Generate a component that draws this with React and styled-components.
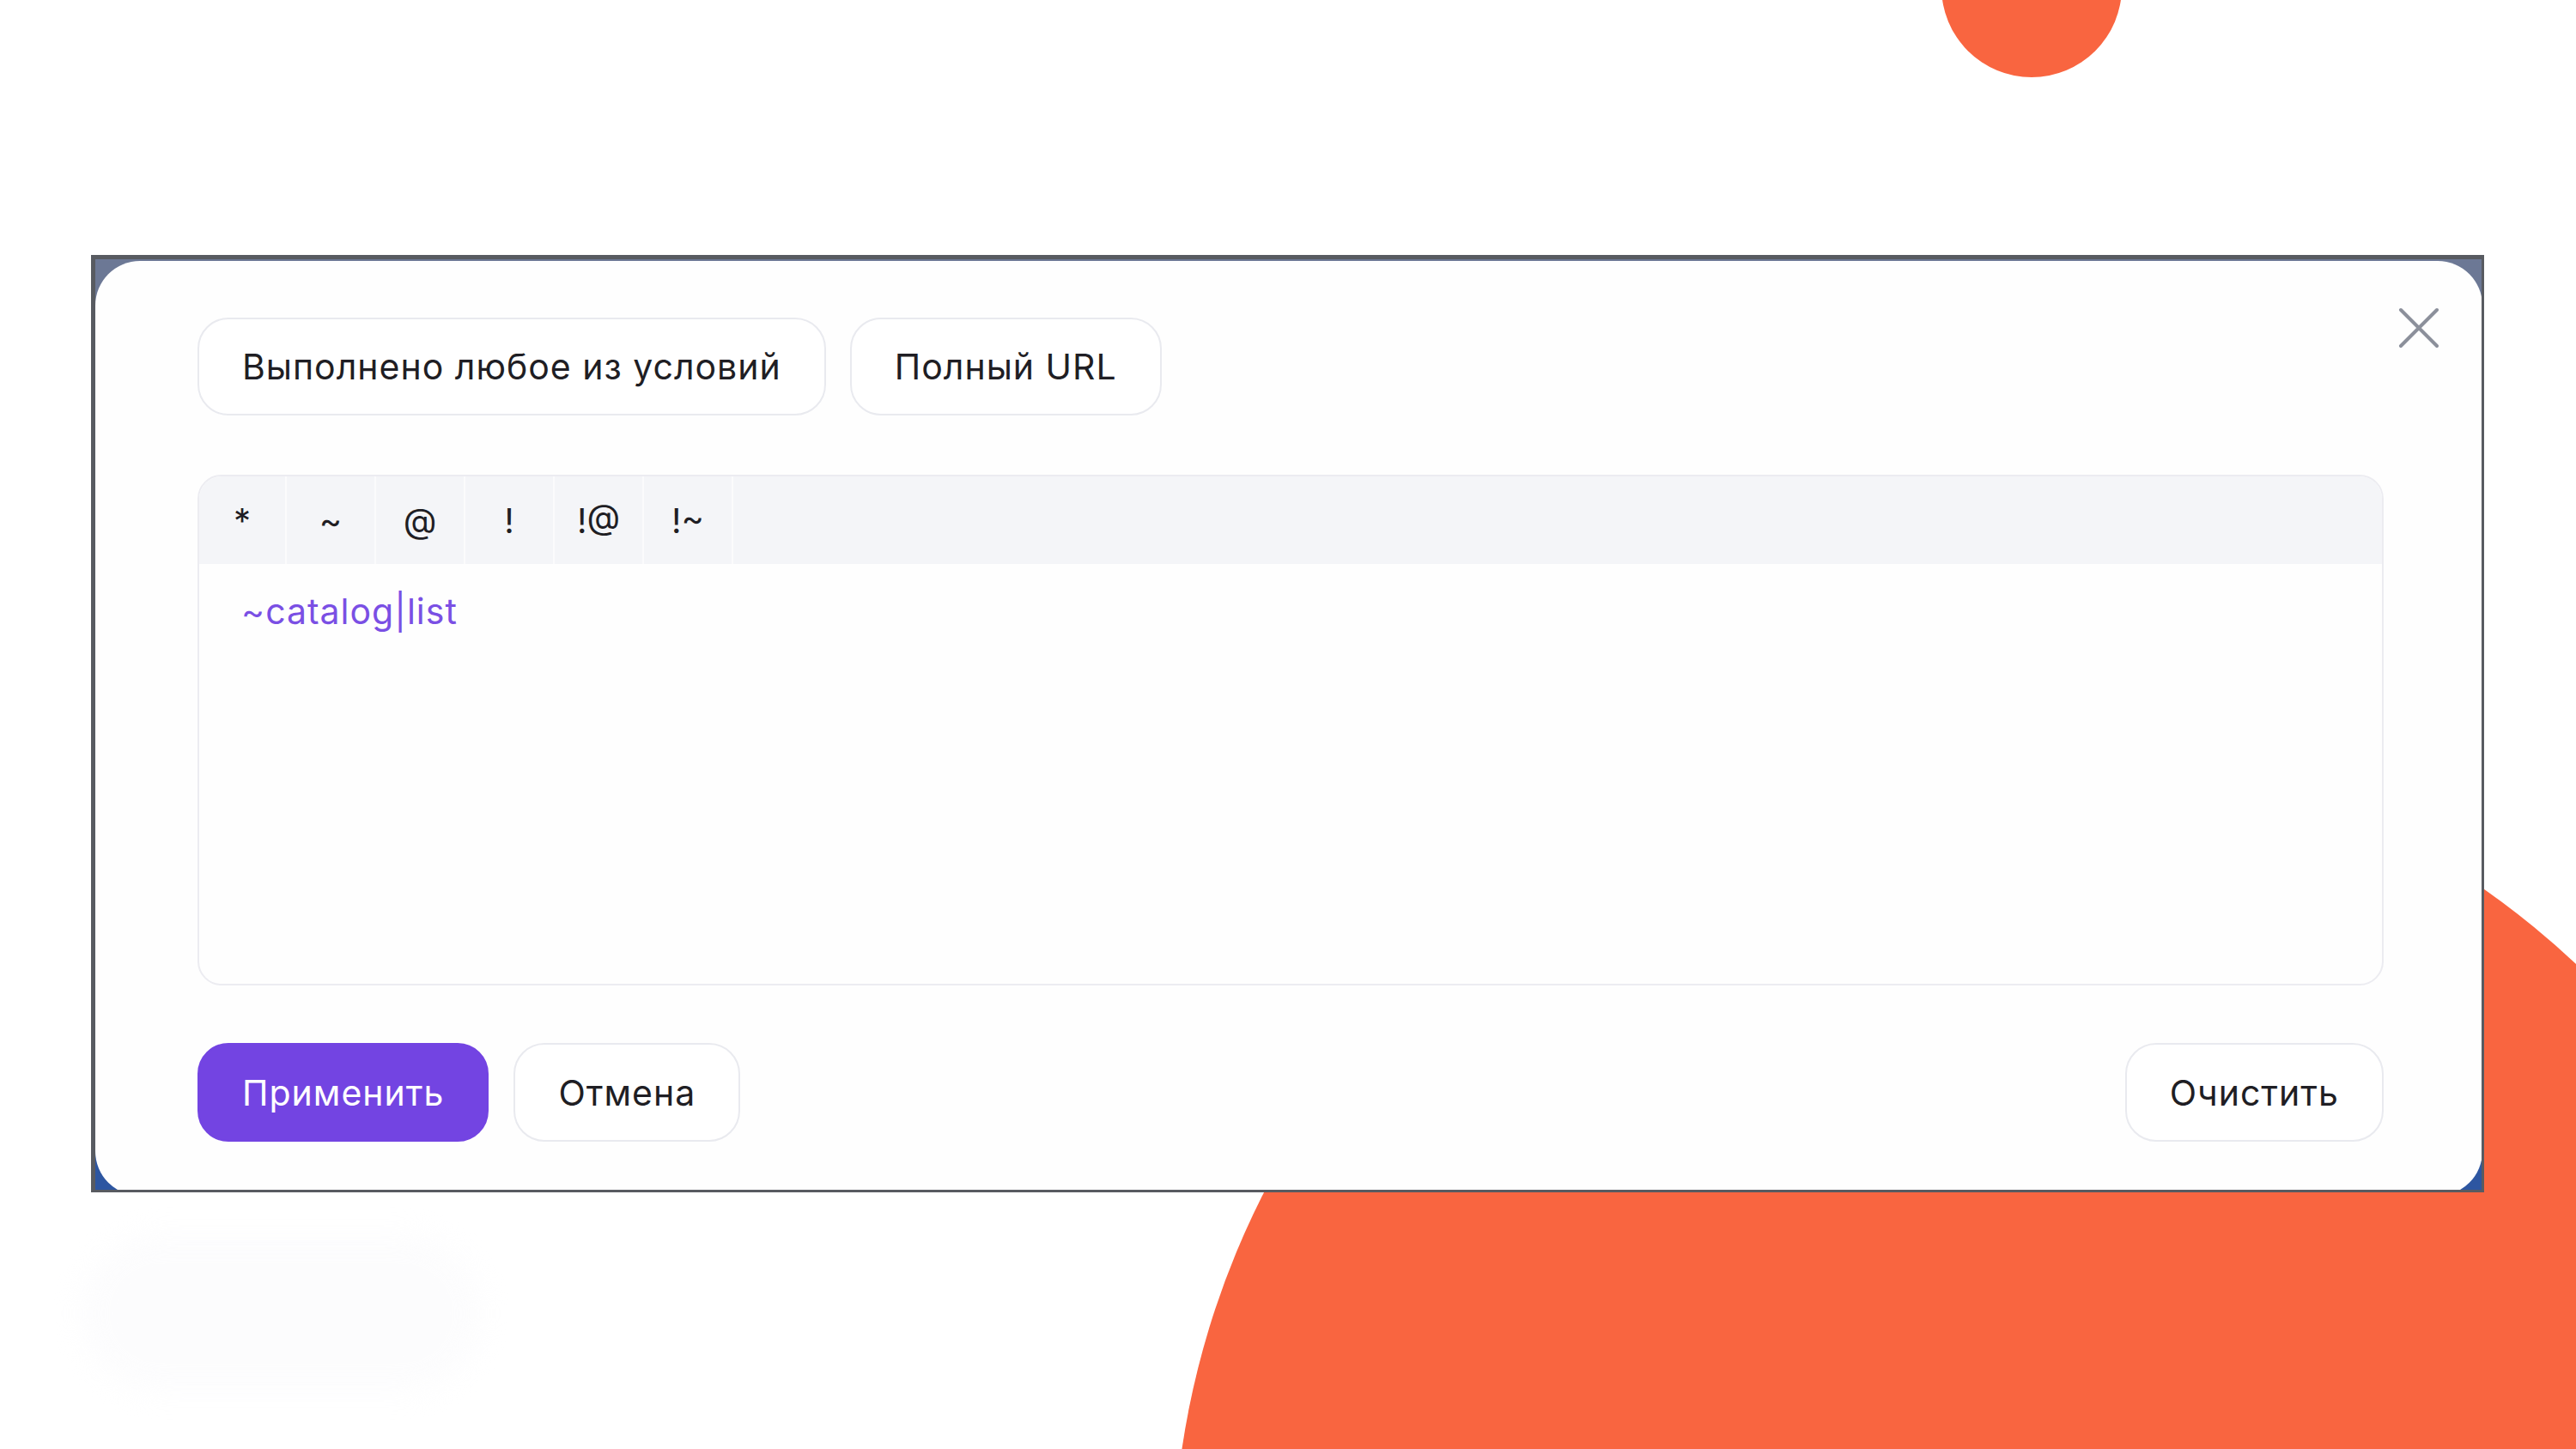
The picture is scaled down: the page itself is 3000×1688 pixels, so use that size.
import React from "react"
import styled, { createGlobalStyle } from "styled-components"

const ORANGE = "#f96540"
const PURPLE = "#7344e2"
const TEXT = "#1f1e24"
const CHIP_BORDER = "#e9eaef"
const FONT = `"Inter", "Noto Sans", sans-serif`

const GlobalStyle = createGlobalStyle`
  html, body {
    margin: 0;
    padding: 0;
    background: #ffffff;
  }

  body {
    font-family: ${FONT};
    color: ${TEXT};
  }
`

/** PAGE AND DECORATION **/
const Page = styled.div`
  position: relative;
  width: 3000px;
  height: 1688px;
  overflow: hidden;
  background: #ffffff;
  padding: 297px 107px 0 106px;
  box-sizing: border-box;
`

const Blob = styled.div`
  position: absolute;
  border-radius: 50%;
  background: ${ORANGE};
  left: ${props => props.x - props.r}px;
  top: ${props => props.y - props.r}px;
  width: ${props => props.r * 2}px;
  height: ${props => props.r * 2}px;
`

const Smudge = styled.div`
  position: absolute;
  left: 95px;
  top: 1440px;
  width: 465px;
  height: 180px;
  border-radius: 90px;
  background: #f9f9fb;
  filter: blur(16px);
  opacity: 0.45;
`

/** SCREENSHOT FRAME **/
const Frame = styled.div`
  position: relative;
  z-index: 1;
  height: 1092px;
  box-sizing: border-box;
  border-style: solid;
  border-color: #585b61;
  border-width: 5px 3px 3px 5px;
  overflow: hidden;
  background: linear-gradient(
    to bottom,
    #6c7895 0%,
    #6c7895 94%,
    #2d56a1 96.5%,
    #2d56a1 100%
  );
`

const Modal = styled.div`
  position: relative;
  height: 1089px;
  margin: 2px -1px 0 0;
  box-sizing: border-box;
  padding: 66px 115px 63px 119px;
  border-radius: 52px;
  background: #fefefe;
  display: flex;
  flex-direction: column;
`

const CloseButton = styled.button`
  position: absolute;
  top: 54px;
  right: 50px;
  width: 48px;
  height: 48px;
  padding: 0;
  border: none;
  background: none;
  display: flex;
  cursor: pointer;
`

/** CHIPS AND BUTTONS **/
const Row = styled.div`
  display: flex;
  align-items: center;
  gap: ${props => props.gap || 28}px;
`

const Pill = styled.button`
  height: ${props => (props.tall ? 115 : 114)}px;
  padding: 0 50px;
  box-sizing: border-box;
  border-radius: 36px;
  border: 2px solid ${props => (props.primary ? PURPLE : CHIP_BORDER)};
  background: ${props => (props.primary ? PURPLE : "#ffffff")};
  color: ${props => (props.primary ? "#ffffff" : TEXT)};
  font-family: ${FONT};
  font-size: 41px;
  letter-spacing: 1px;
  white-space: nowrap;
  cursor: pointer;
`

const Spacer = styled.div`
  flex: 1;
`

/** EDITOR **/
const Editor = styled.div`
  margin: 69px 0 67px;
  height: 595px;
  box-sizing: border-box;
  border: 2px solid #ececf1;
  border-radius: 28px;
  overflow: hidden;
  display: flex;
  flex-direction: column;
`

const Toolbar = styled.div`
  display: flex;
  height: 102px;
  background: #f4f5f8;
`

const ToolButton = styled.button`
  width: 104px;
  height: 100%;
  padding: 0;
  border: none;
  border-right: 2px solid #fbfbfc;
  background: transparent;
  color: ${TEXT};
  font-family: ${FONT};
  font-size: 40px;
  display: flex;
  align-items: center;
  justify-content: center;
  cursor: pointer;

  &:first-child {
    width: 102px;
  }
`

const Code = styled.div`
  flex: 1;
  padding: 30px 49px;
  font-size: 41px;
  line-height: 50px;
  color: #7a4fe4;
  letter-spacing: 1px;
`

const TOOLS = ["*", "~", "@", "!", "!@", "!~"]

const CloseIcon = () => (
  <svg width="48" height="48" viewBox="0 0 48 48" fill="none">
    <path
      d="M3 3L45 45M45 3L3 45"
      stroke="#8c909b"
      strokeWidth="4"
      strokeLinecap="round"
    />
  </svg>
)

const App = () => (
  <>
    <GlobalStyle />
    <Page>
      <Blob x={2366} y={-15} r={105} />
      <Blob x={2336} y={1830} r={970} />
      <Smudge />
      <Frame>
        <Modal>
          <CloseButton aria-label="Закрыть">
            <CloseIcon />
          </CloseButton>
          <Row>
            <Pill>Выполнено любое из условий</Pill>
            <Pill>Полный URL</Pill>
          </Row>
          <Editor>
            <Toolbar>
              {TOOLS.map(tool => (
                <ToolButton key={tool}>{tool}</ToolButton>
              ))}
            </Toolbar>
            <Code>~catalog|list</Code>
          </Editor>
          <Row gap={29}>
            <Pill tall primary>
              Применить
            </Pill>
            <Pill tall>Отмена</Pill>
            <Spacer />
            <Pill tall>Очистить</Pill>
          </Row>
        </Modal>
      </Frame>
    </Page>
  </>
)

export default App
